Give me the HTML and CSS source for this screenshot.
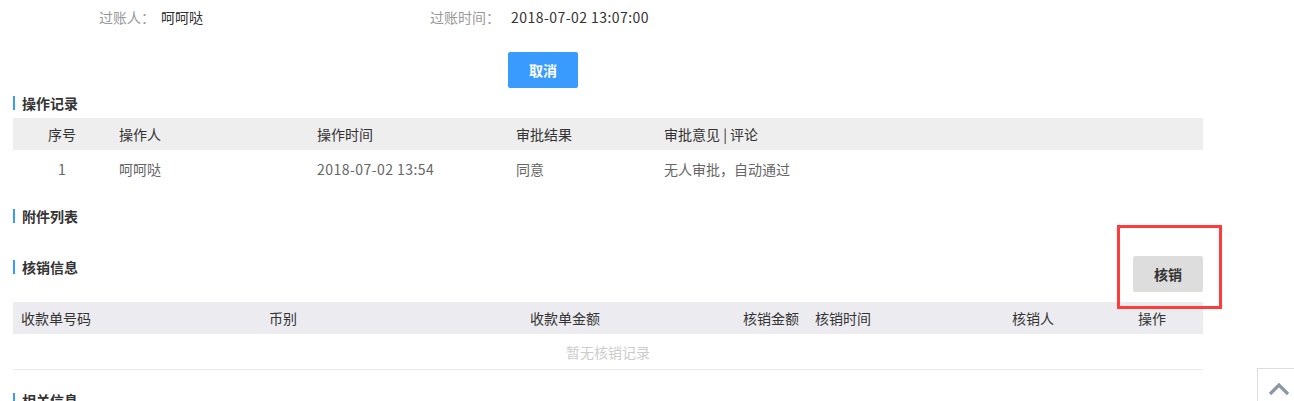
FILE: index.html
```html
<!DOCTYPE html>
<html lang="zh-CN">
<head>
<meta charset="utf-8">
<title>核销信息</title>
<link rel="stylesheet" href="styles.css">
</head>
<body>
<div class="page">
  <div class="info">
    <div class="field field-1"><span class="label">过账人：</span><span class="value">呵呵哒</span></div>
    <div class="field field-2"><span class="label">过账时间：</span><span class="value num">2018-07-02 13:07:00</span></div>
  </div>
  <div class="actions"><button class="btn btn-primary">取消</button></div>

  <h3 class="sec sec-log">操作记录</h3>
  <table class="tbl tbl-log">
    <colgroup><col class="c1"><col class="c2"><col class="c3"><col class="c4"><col class="c5"></colgroup>
    <thead><tr><th class="center">序号</th><th>操作人</th><th>操作时间</th><th>审批结果</th><th>审批意见 | 评论</th></tr></thead>
    <tbody><tr><td class="center">1</td><td>呵呵哒</td><td class="num">2018-07-02 13:54</td><td>同意</td><td>无人审批，自动通过</td></tr></tbody>
  </table>

  <h3 class="sec sec-attach">附件列表</h3>

  <div class="sec-row">
    <h3 class="sec sec-verify">核销信息</h3>
    <button class="btn btn-gray">核销</button>
  </div>
  <table class="tbl tbl-verify">
    <colgroup><col class="v1"><col class="v2"><col class="v3"><col class="v4"><col class="v5"><col class="v6"><col class="v7"></colgroup>
    <thead><tr><th>收款单号码</th><th>币别</th><th class="right">收款单金额</th><th class="right">核销金额</th><th>核销时间</th><th>核销人</th><th>操作</th></tr></thead>
    <tbody><tr><td colspan="7" class="empty">暂无核销记录</td></tr></tbody>
  </table>

  <h3 class="sec sec-related">相关信息</h3>
</div>
<div class="highlight"></div>
<a class="to-top" href="#"><svg width="22" height="14" viewBox="0 0 22 14"><polyline points="2,12 11,3 20,12" fill="none" stroke="#8c98a4" stroke-width="3.2"/></svg></a>
</body>
</html>
```
FILE: styles.css
```css
html, body {
  margin: 0;
  padding: 0;
  background: #fff;
}
body {
  font-family: "Noto Sans CJK SC", "Microsoft YaHei", sans-serif;
  font-size: 14px;
  color: #333;
  overflow: hidden;
  height: 401px;
}
.page {
  width: 1216px;
}
.num {
  letter-spacing: 0.45px;
}
.info {
  display: flex;
  padding-top: 7px;
  height: 20px;
  line-height: 20px;
}
.field {
  display: flex;
}
.field-1 {
  width: 345px;
}
.label {
  width: 155px;
  text-align: right;
  color: #999;
  padding-right: 6px;
}
.field-2 .label {
  padding-right: 11px;
}
.value {
  color: #333;
}
.actions {
  margin-top: 25px;
  padding-left: 508px;
  height: 36px;
}
.btn {
  border: none;
  border-radius: 2px;
  width: 70px;
  height: 36px;
  font-family: inherit;
  font-size: 14px;
  font-weight: bold;
  padding: 0;
  cursor: pointer;
}
.btn-primary {
  background: #3a9bff;
  color: #fff;
}
.btn-gray {
  background: #dddddd;
  color: #333;
}
.sec {
  margin: 0 0 0 13px;
  border-left: 2px solid #3a9bff;
  padding-left: 7px;
  height: 14px;
  line-height: 14px;
  font-size: 14px;
  font-weight: bold;
  color: #333;
}
.sec-log { margin-top: 8px; }
.sec-attach { margin-top: 21px; }
.sec-related { margin-top: 23px; }
.sec-row {
  margin-top: 33px;
  width: 1203px;
  display: flex;
  justify-content: space-between;
  align-items: flex-start;
}
.sec-row .sec {
  margin-top: 4px;
}
.tbl {
  margin-left: 13px;
  width: 1190px;
  border-collapse: collapse;
  table-layout: fixed;
}
.tbl th, .tbl td {
  padding: 0 8px;
  text-align: left;
  font-weight: normal;
  white-space: nowrap;
}
.tbl th {
  height: 32px;
  color: #333;
}
.tbl td {
  color: #666;
}
.tbl .center { text-align: center; }
.tbl .right { text-align: right; }
.tbl-log { margin-top: 8px; }
.tbl-log th { background: #eeeeee; }
.tbl-log td { height: 38px; }
.tbl-log .c1 { width: 98px; }
.tbl-log .c2 { width: 198px; }
.tbl-log .c3 { width: 199px; }
.tbl-log .c4 { width: 148px; }
.tbl-log .c5 { width: 547px; }
.tbl-verify { margin-top: 10px; }
.tbl-verify th { background: #ececf0; }
.tbl-verify .v1 { width: 248px; }
.tbl-verify .v2 { width: 147px; }
.tbl-verify .v3 { width: 200px; }
.tbl-verify .v4 { width: 199px; }
.tbl-verify .v5 { width: 197px; }
.tbl-verify .v6 { width: 126px; }
.tbl-verify .v7 { width: 73px; }
.tbl-verify td.empty {
  height: 35px;
  text-align: center;
  color: #cccccc;
  border-bottom: 1px solid #e8e8e8;
}
.highlight {
  position: absolute;
  left: 1117px;
  top: 225px;
  width: 105px;
  height: 84px;
  box-sizing: border-box;
  border: 3px solid #ff3b3b;
}
.to-top {
  position: fixed;
  left: 1257px;
  top: 368px;
  width: 44px;
  height: 44px;
  box-sizing: border-box;
  border: 1px solid #dddddd;
  background: #fff;
  display: flex;
  justify-content: center;
  padding-top: 13px;
}
.to-top svg {
  display: block;
}
```
